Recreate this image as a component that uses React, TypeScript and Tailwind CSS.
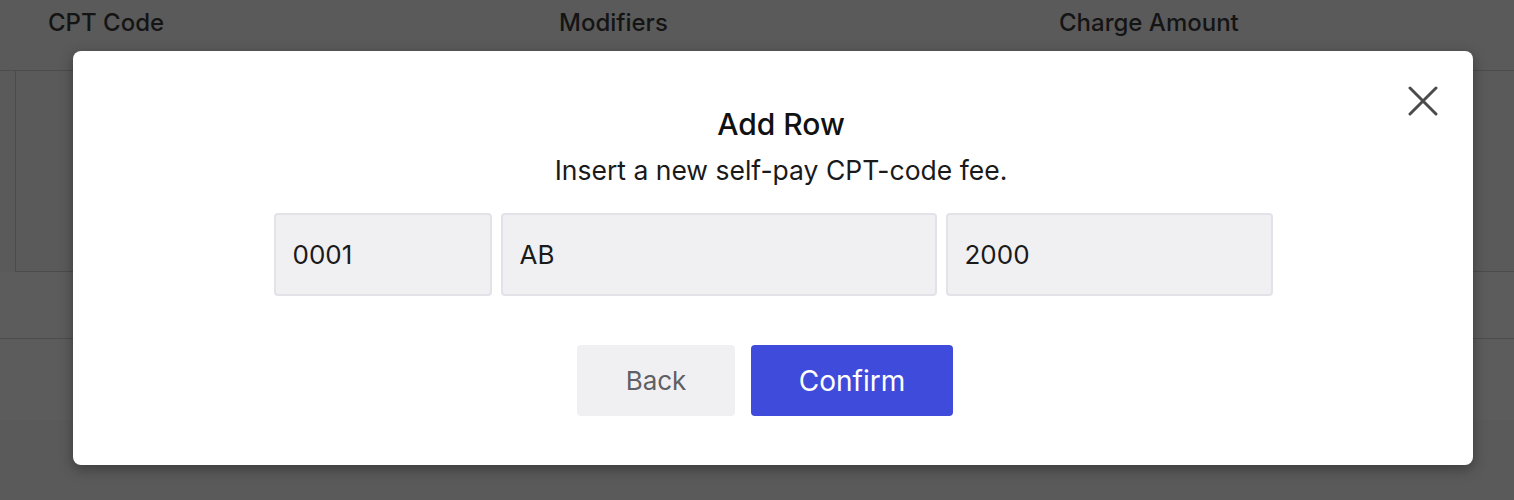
const font = { fontFamily: 'Inter, "Noto Sans", sans-serif' };

function Backdrop() {
  return (
    <div className="h-[500px] w-full bg-[#5a5a5a] text-[#141414]" style={font}>
      <div className="grid h-[71px] grid-cols-[559px_500px_1fr] items-start border-b border-[#4c4c4c] pt-[5px] text-[24px] font-medium">
        <div className="pl-[48px]">CPT Code</div>
        <div>Modifiers</div>
        <div>Charge Amount</div>
      </div>
      <div className="ml-[15px] h-[201px] border-b border-l border-[#4c4c4c]" />
      <div className="h-[67px] border-b border-[#4c4c4c] bg-[#5c5c5c]" />
      <div className="h-[81px] bg-[#5c5c5c]" />
    </div>
  );
}

function Field({ value }: { value: string }) {
  return (
    <div className="flex h-[83px] items-center rounded-[4px] border-2 border-[#e2e2e8] bg-[#f0f0f3] pl-[17px] text-[26px] text-[#1a1a1a]">
      {value}
    </div>
  );
}

function CloseIcon() {
  return (
    <svg width="30" height="30" viewBox="0 0 30 30" fill="none" stroke="#4b4b4b" strokeWidth="3" strokeLinecap="round">
      <path d="M2 2L28 28M28 2L2 28" />
    </svg>
  );
}

export default function App() {
  return (
    <div className="relative h-[500px] w-full overflow-hidden">
      <Backdrop />
      <div
        className="absolute left-[73px] top-[51px] flex h-[414px] w-[1400px] flex-col items-center rounded-lg bg-white pt-[55px] shadow-[0_4px_14px_rgba(0,0,0,0.35)]"
        style={font}
      >
        <button className="absolute right-[35px] top-[35px]">
          <CloseIcon />
        </button>
        <h2 className="pl-[16px] text-[30px] font-medium leading-[36px] text-[#111]">Add Row</h2>
        <p className="mt-[12px] pl-[16px] text-[26.5px] leading-[32px] text-[#1a1a1a]">
          Insert a new self-pay CPT-code fee.
        </p>
        <div className="mt-[27px] grid w-[999px] grid-cols-[2fr_4fr_3fr] gap-[9px]">
          <Field value="0001" />
          <Field value="AB" />
          <Field value="2000" />
        </div>
        <div className="mt-[49px] flex gap-[16px] pr-[16px]">
          <button className="h-[71px] w-[158px] rounded-[4px] bg-[#f0f0f3] text-[26px] text-[#5f5f66]">
            Back
          </button>
          <button className="h-[71px] w-[202px] rounded-[4px] bg-[#3f4bdb] text-[28px] text-white">
            Confirm
          </button>
        </div>
      </div>
    </div>
  );
}
